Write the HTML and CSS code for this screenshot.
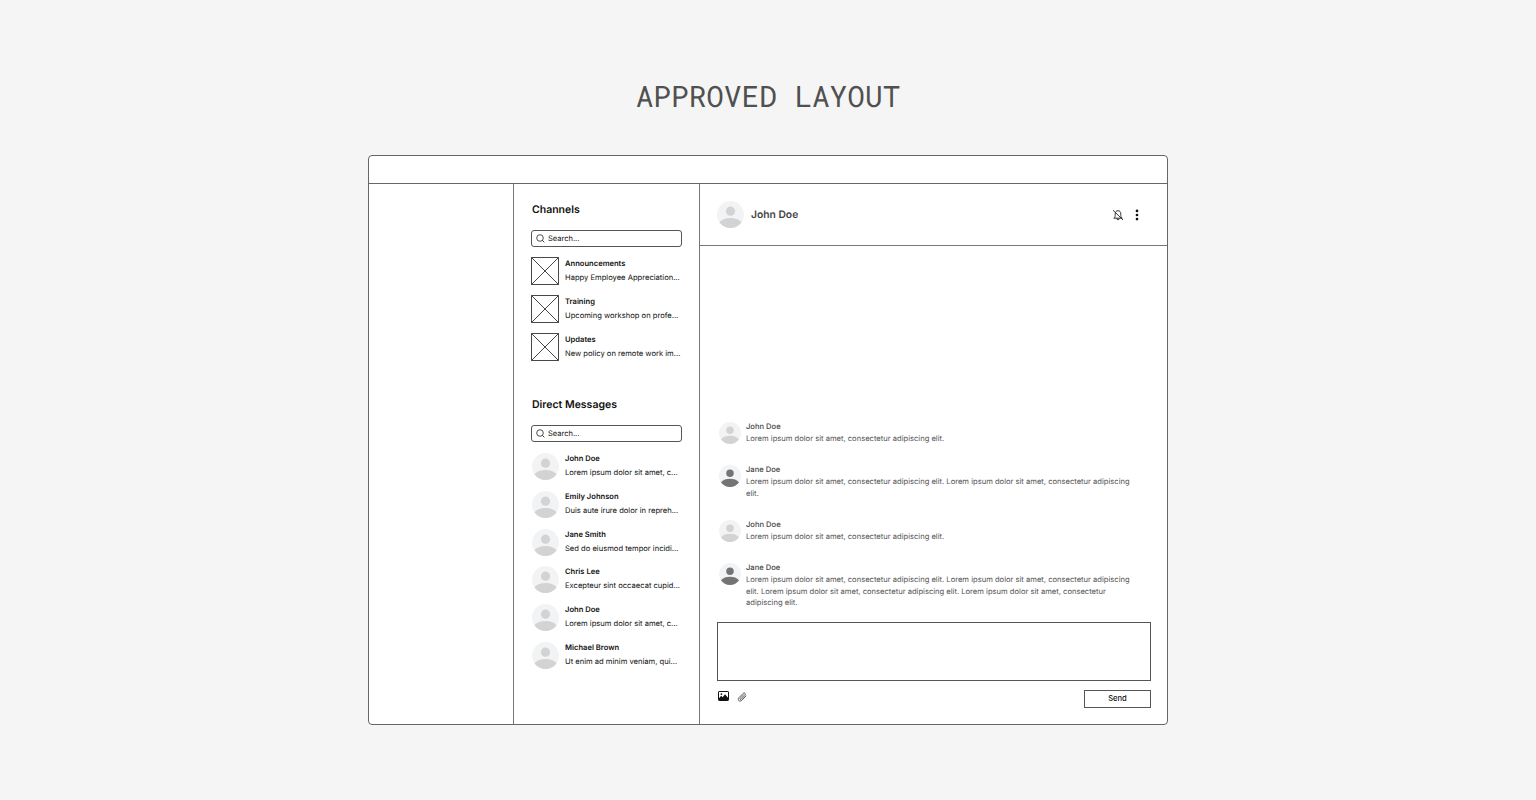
FILE: index.html
```html
<!DOCTYPE html>
<html lang="en">
<head>
  <meta charset="UTF-8">
  <meta name="viewport" content="width=device-width, initial-scale=1.0">
  <title>Approved Layout</title>
  <link rel="stylesheet" href="styles.css">
</head>
<body>
  <svg class="sprite" width="0" height="0">
    <symbol id="avatar" viewBox="0 0 27 27">
      <circle cx="13.5" cy="13.5" r="13.5" fill="#f2f3f5"/>
      <circle cx="13.5" cy="10.2" r="4.6" fill="currentColor"/>
      <path d="M2.4 21.2C5 18.4 9 17 13.5 17s8.500 1.400 11.100 4.200A13.500 13.500 0 0 1 13.500 27 13.500 13.500 0 0 1 2.400 21.200z" fill="currentColor"/>
    </symbol>
    <symbol id="box" viewBox="0 0 28 28">
      <path d="M.5.5h27v27H.5zM.5.5l27 27M27.500.5l-27 27" fill="none" stroke="#333" stroke-width=".9"/>
    </symbol>
    <symbol id="search" viewBox="0 0 9 9">
      <circle cx="4" cy="4" r="3.300" fill="none" stroke="#222" stroke-width=".8"/>
      <path d="M6.300 6.300l2 2" stroke="#222" stroke-width=".9"/>
    </symbol>
  </svg>

  <h1 class="title">APPROVED LAYOUT</h1>

  <div class="window">
    <div class="topbar"></div>
    <div class="content">
      <div class="nav"></div>

      <div class="lists">
        <section class="channels">
          <h2>Channels</h2>
          <div class="search"><svg><use href="#search"/></svg><span>Search...</span></div>
          <div class="item">
            <svg class="thumb"><use href="#box"/></svg>
            <div class="info"><h3>Announcements</h3><p>Happy Employee Appreciation...</p></div>
          </div>
          <div class="item">
            <svg class="thumb"><use href="#box"/></svg>
            <div class="info"><h3>Training</h3><p>Upcoming workshop on profe...</p></div>
          </div>
          <div class="item">
            <svg class="thumb"><use href="#box"/></svg>
            <div class="info"><h3>Updates</h3><p>New policy on remote work im...</p></div>
          </div>
        </section>

        <section class="direct">
          <h2>Direct Messages</h2>
          <div class="search"><svg><use href="#search"/></svg><span>Search...</span></div>
          <div class="item">
            <svg class="avatar"><use href="#avatar"/></svg>
            <div class="info"><h3>John Doe</h3><p>Lorem ipsum dolor sit amet, c...</p></div>
          </div>
          <div class="item">
            <svg class="avatar"><use href="#avatar"/></svg>
            <div class="info"><h3>Emily Johnson</h3><p>Duis aute irure dolor in repreh...</p></div>
          </div>
          <div class="item">
            <svg class="avatar"><use href="#avatar"/></svg>
            <div class="info"><h3>Jane Smith</h3><p>Sed do eiusmod tempor incidi...</p></div>
          </div>
          <div class="item">
            <svg class="avatar"><use href="#avatar"/></svg>
            <div class="info"><h3>Chris Lee</h3><p>Excepteur sint occaecat cupid...</p></div>
          </div>
          <div class="item">
            <svg class="avatar"><use href="#avatar"/></svg>
            <div class="info"><h3>John Doe</h3><p>Lorem ipsum dolor sit amet, c...</p></div>
          </div>
          <div class="item">
            <svg class="avatar"><use href="#avatar"/></svg>
            <div class="info"><h3>Michael Brown</h3><p>Ut enim ad minim veniam, qui...</p></div>
          </div>
        </section>
      </div>

      <main class="chat">
        <header class="chat-header">
          <svg class="avatar"><use href="#avatar"/></svg>
          <span class="chat-name">John Doe</span>
          <svg class="bell" viewBox="0 0 12 12" fill="none" stroke="#222" stroke-width=".9">
            <path d="M1.500 9.200h9M2.500 9c.6-1 .7-2 .7-4C3.200 3 4.300 1.700 6 1.700S8.800 3 8.800 5c0 2 .1 3 .8 4M4.700 9.400c0 1.800 2.600 1.800 2.600 0M1 1.200l10 9.800"/>
          </svg>
          <svg class="dots" viewBox="0 0 4 12" fill="#111">
            <circle cx="2" cy="1.900" r="1.350"/><circle cx="2" cy="6" r="1.350"/><circle cx="2" cy="10.100" r="1.350"/>
          </svg>
        </header>

        <div class="messages">
          <div class="message">
            <svg class="avatar small"><use href="#avatar"/></svg>
            <div class="text"><h4>John Doe</h4><p>Lorem ipsum dolor sit amet, consectetur adipiscing elit.</p></div>
          </div>
          <div class="message">
            <svg class="avatar small dark"><use href="#avatar"/></svg>
            <div class="text"><h4>Jane Doe</h4><p>Lorem ipsum dolor sit amet, consectetur adipiscing elit. Lorem ipsum dolor sit amet, consectetur adipiscing<br>elit.</p></div>
          </div>
          <div class="message">
            <svg class="avatar small"><use href="#avatar"/></svg>
            <div class="text"><h4>John Doe</h4><p>Lorem ipsum dolor sit amet, consectetur adipiscing elit.</p></div>
          </div>
          <div class="message">
            <svg class="avatar small dark"><use href="#avatar"/></svg>
            <div class="text"><h4>Jane Doe</h4><p>Lorem ipsum dolor sit amet, consectetur adipiscing elit. Lorem ipsum dolor sit amet, consectetur adipiscing<br>elit. Lorem ipsum dolor sit amet, consectetur adipiscing elit. Lorem ipsum dolor sit amet, consectetur</p><p class="last">adipiscing elit.</p></div>
          </div>
        </div>

        <div class="composer"></div>
        <div class="actions">
          <svg class="image" viewBox="0 0 11 10">
            <rect x=".5" y=".5" width="10" height="9" rx=".6" fill="#fff" stroke="#111"/>
            <path d="M1 9V7.200l2.200-2.500 1.500 1.500 2.300-3 3 3.600V9z" fill="#111"/>
            <circle cx="3.400" cy="3.100" r=".9" fill="#111"/>
          </svg>
          <svg class="clip" viewBox="0 0 10 10" fill="none" stroke="#333" stroke-width=".8" stroke-linecap="round">
            <path d="M6.700 2.700L3.200 6.300c-.7.800.3 1.700 1 1l3.700-3.900c1.400-1.500-.5-3.300-1.900-1.900L2 5.600C-.1 7.900 2.600 10.500 4.800 8.300L8.900 4"/>
          </svg>
          <button class="send">Send</button>
        </div>
      </main>
    </div>
  </div>
</body>
</html>
```
FILE: styles.css
```css
* {
  box-sizing: border-box;
}
body {
  margin: 0;
  height: 800px;
  overflow: hidden;
  background: #f5f5f5;
  font-family: Inter, "Liberation Sans", sans-serif;
  color: #111;
  text-rendering: geometricPrecision;
}
h1, h2, h3, h4, p {
  margin: 0;
}
svg {
  display: block;
  flex: none;
}
.sprite {
  position: absolute;
}
.title {
  padding-top: 76px;
  height: 155px;
  font: 400 29.4px/40px "Roboto Mono", "Liberation Mono", monospace;
  text-align: center;
  color: #505050;
}
.window {
  display: flex;
  flex-direction: column;
  width: 800px;
  height: 570px;
  margin: 0 auto;
  background: #fff;
  border: 1px solid #666;
  border-radius: 4px;
}
.topbar {
  height: 28px;
  border-bottom: 1px solid #666;
}
.content {
  display: flex;
  flex: 1;
}
.nav {
  width: 145px;
  border-right: 1px solid #777;
}
.lists {
  width: 186px;
  padding: 19px 16px 0 17px;
  border-right: 1px solid #777;
}
.channels {
  height: 195px;
}
h2 {
  margin-left: 1px;
  font-size: 10.5px;
  line-height: 14px;
  font-weight: 600;
  color: #111;
}
.search {
  display: flex;
  align-items: center;
  gap: 3px;
  width: 151px;
  height: 17px;
  margin: 13px 0 10px;
  padding-left: 4px;
  border: 1px solid #555;
  border-radius: 3px;
  font-size: 7.5px;
}
.search svg {
  width: 9px;
  height: 9px;
}
.item {
  display: flex;
  gap: 6px;
  height: 28px;
  margin-bottom: 10px;
}
.direct .item {
  margin-bottom: 9.8px;
}
.thumb {
  width: 28px;
  height: 28px;
}
.avatar {
  width: 27px;
  height: 27px;
  color: #d3d3d3;
}
.direct .avatar {
  margin: 1px 0 0 1px;
}
.info {
  white-space: nowrap;
}
.info h3 {
  font-size: 7.6px;
  line-height: 14px;
  font-weight: 600;
}
.info p {
  font-size: 7.6px;
  line-height: 14px;
}
.chat {
  flex: 1;
  display: flex;
  flex-direction: column;
}
.chat-header {
  display: flex;
  align-items: center;
  height: 62px;
  padding: 0 28px 0 17px;
  border-bottom: 1px solid #777;
}
.chat-name {
  flex: 1;
  margin-left: 7px;
  font-size: 10.3px;
  font-weight: 600;
  color: #444;
}
.bell {
  width: 12px;
  height: 12px;
  margin-right: 11px;
}
.dots {
  width: 4px;
  height: 12px;
}
.messages {
  display: flex;
  flex-direction: column;
  justify-content: flex-end;
  height: 361px;
  padding-left: 19px;
}
.message {
  display: flex;
  gap: 5px;
  margin-bottom: 19px;
}
.message:last-child {
  margin-bottom: 0;
}
.small {
  width: 22px;
  height: 22px;
  margin-top: 1px;
}
.dark {
  color: #747474;
}
.text {
  white-space: nowrap;
  color: #555;
  font-size: 7.6px;
  line-height: 12px;
}
.text h4 {
  font-size: 7.6px;
  font-weight: 500;
  color: #444;
}
.text .last {
  line-height: 9px;
}
.composer {
  width: 434px;
  height: 59px;
  margin: 15px 0 9px 17px;
  border: 1px solid #555;
}
.actions {
  display: flex;
  width: 434px;
  margin-left: 17px;
}
.image {
  width: 11px;
  height: 10px;
  margin: 1px 8px 0 1px;
}
.clip {
  width: 10px;
  height: 10px;
  margin-top: 2px;
}
.send {
  width: 67px;
  height: 18px;
  margin-left: auto;
  padding: 0;
  background: #fff;
  border: 1px solid #555;
  font: 500 7.6px/16px Inter, "Liberation Sans", sans-serif;
  color: #111;
}
```
